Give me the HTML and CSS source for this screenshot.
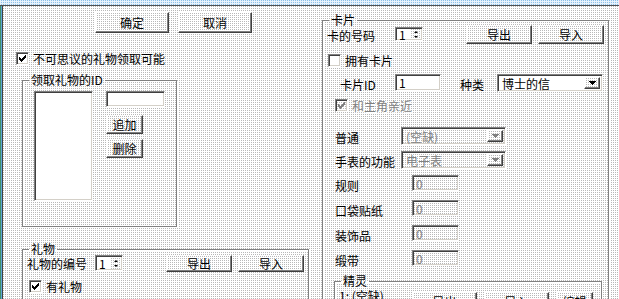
FILE: index.html
```html
<!DOCTYPE html>
<html lang="zh-CN">
<head>
    <meta charset="UTF-8">
    <meta name="viewport" content="width=device-width, initial-scale=1.0">
    <title>礼物与卡片</title>
    <link rel="stylesheet" href="styles.css">
</head>
<body>
    <div class="screen">
        <div class="top-edge"></div>
        <div class="main">
            <div class="left-edge"></div>

            <!-- left column -->
            <div class="col-left">
                <div class="dialog-buttons">
                    <button class="btn btn-wide">确定</button>
                    <button class="btn btn-wide">取消</button>
                </div>

                <div class="check-row wonder-row">
                    <span class="check"><svg viewBox="0 0 7 7" width="7" height="7"><path d="M0 2h1v1h1v1h1v-1h1v-1h1v-1h1v-1h1v3h-1v1h-1v1h-1v1h-1v1h-1v-1h-1v-1h-1z"/></svg></span>
                    <span>不可思议的礼物领取可能</span>
                </div>

                <fieldset class="group group-ids">
                    <legend>领取礼物的ID</legend>
                    <div class="ids-body">
                        <div class="sunken listbox"></div>
                        <div class="ids-side">
                            <div class="sunken id-field"></div>
                            <button class="btn btn-small">追加</button>
                            <button class="btn btn-small">删除</button>
                        </div>
                    </div>
                </fieldset>

                <fieldset class="group group-gift">
                    <legend>礼物</legend>
                    <div class="gift-row">
                        <span class="gift-label">礼物的编号</span>
                        <div class="sunken spin">
                            <span class="spin-val">1</span>
                            <span class="spin-btns"><i class="arr-up"></i><i class="arr-down"></i></span>
                        </div>
                        <button class="btn btn-io btn-export">导出</button>
                        <button class="btn btn-io">导入</button>
                    </div>
                    <div class="check-row has-gift">
                        <span class="check"><svg viewBox="0 0 7 7" width="7" height="7"><path d="M0 2h1v1h1v1h1v-1h1v-1h1v-1h1v-1h1v3h-1v1h-1v1h-1v1h-1v1h-1v-1h-1v-1h-1z"/></svg></span>
                        <span>有礼物</span>
                    </div>
                </fieldset>
            </div>

            <!-- right column -->
            <div class="col-right">
                <fieldset class="group group-card">
                    <legend>卡片</legend>

                    <div class="card-row row-number">
                        <span class="lbl lbl-number">卡的号码</span>
                        <div class="sunken spin spin-card">
                            <span class="spin-val">1</span>
                            <span class="spin-btns"><i class="arr-up"></i><i class="arr-down"></i></span>
                        </div>
                        <button class="btn btn-io btn-card-export">导出</button>
                        <button class="btn btn-io">导入</button>
                    </div>

                    <div class="check-row own-row">
                        <span class="check"></span>
                        <span>拥有卡片</span>
                    </div>

                    <div class="card-row row-id">
                        <span class="lbl lbl-id">卡片ID</span>
                        <div class="sunken text-field card-id">1</div>
                        <span class="lbl lbl-kind">种类</span>
                        <div class="sunken combo kind-combo">
                            <span class="combo-text">博士的信</span>
                            <span class="drop"><svg viewBox="0 0 7 4" width="7" height="4"><path d="M0 0h7v1h-1v1h-1v1h-1v1h-1v-1h-1v-1h-1v-1h-1z"/></svg></span>
                        </div>
                    </div>

                    <div class="check-row close-row disabled">
                        <span class="check"><svg viewBox="0 0 7 7" width="7" height="7"><path d="M0 2h1v1h1v1h1v-1h1v-1h1v-1h1v-1h1v3h-1v1h-1v1h-1v1h-1v1h-1v-1h-1v-1h-1z"/></svg></span>
                        <span>和主角亲近</span>
                    </div>

                    <div class="card-row combo-row first-combo">
                        <span class="lbl lbl-combo">普通</span>
                        <div class="sunken combo combo-off">
                            <span class="combo-text">(空缺)</span>
                            <span class="drop"><svg viewBox="0 0 7 4" width="7" height="4"><path d="M0 0h7v1h-1v1h-1v1h-1v1h-1v-1h-1v-1h-1v-1h-1z"/></svg></span>
                        </div>
                    </div>

                    <div class="card-row combo-row">
                        <span class="lbl lbl-combo">手表的功能</span>
                        <div class="sunken combo combo-off">
                            <span class="combo-text">电子表</span>
                            <span class="drop"><svg viewBox="0 0 7 4" width="7" height="4"><path d="M0 0h7v1h-1v1h-1v1h-1v1h-1v-1h-1v-1h-1v-1h-1z"/></svg></span>
                        </div>
                    </div>

                    <div class="card-row num-row">
                        <span class="lbl lbl-num">规则</span>
                        <div class="sunken text-field num-off">0</div>
                    </div>
                    <div class="card-row num-row">
                        <span class="lbl lbl-num">口袋贴纸</span>
                        <div class="sunken text-field num-off">0</div>
                    </div>
                    <div class="card-row num-row">
                        <span class="lbl lbl-num">装饰品</span>
                        <div class="sunken text-field num-off">0</div>
                    </div>
                    <div class="card-row num-row">
                        <span class="lbl lbl-num">缎带</span>
                        <div class="sunken text-field num-off">0</div>
                    </div>

                    <fieldset class="group group-spirit">
                        <legend>精灵</legend>
                        <div class="spirit-row">
                            <span class="spirit-slot">1: (空缺)</span>
                            <button class="btn btn-spirit">导出</button>
                            <button class="btn btn-spirit">导入</button>
                            <button class="btn btn-edit">编辑</button>
                        </div>
                    </fieldset>
                </fieldset>
            </div>
        </div>
    </div>
</body>
</html>
```

FILE: styles.css
```css
* {
    box-sizing: border-box;
}

body {
    margin: 0;
    font-family: "Noto Sans CJK SC", "Noto Sans", sans-serif;
    font-size: 12px;
    line-height: 12px;
    color: #000;
}

/* dithered window face */
.screen {
    width: 619px;
    height: 299px;
    overflow: hidden;
    background: conic-gradient(#b8b8b8 25%, #fff 0) 0 0 / 2px 2px;
}

.top-edge {
    height: 6px;
    background: conic-gradient(#8cbfe8 25%, #e6f2fc 0) 0 0 / 2px 2px;
    border-bottom: 1px solid #505050;
}

.main {
    display: flex;
    height: 293px;
}

.left-edge {
    width: 3px;
    background: linear-gradient(to right, #3f8f6a 0 1px, #5fa8d8 1px 2px, #404040 2px);
}

.col-left {
    width: 306px;
    flex: none;
}

.col-right {
    width: 287px;
    margin-left: 13px;
    flex: none;
}

/* controls */
.btn {
    display: flex;
    align-items: center;
    justify-content: center;
    padding: 0;
    font: inherit;
    color: #000;
    background: conic-gradient(#b8b8b8 25%, #fff 0) 0 0 / 2px 2px;
    border: 1px solid;
    border-color: #fff #404040 #404040 #fff;
    box-shadow: inset -1px -1px #808080;
}

.sunken {
    background: #fff;
    border: 1px solid;
    border-color: #808080 #fff #fff #808080;
    box-shadow: inset 1px 1px #404040, inset -1px -1px #d4d0c8;
}

.check {
    width: 13px;
    height: 13px;
    flex: none;
    display: flex;
    align-items: center;
    justify-content: center;
    background: #fff;
    border: 1px solid;
    border-color: #808080 #fff #fff #808080;
    box-shadow: inset 1px 1px #404040, inset -1px -1px #d4d0c8;
}

.check svg {
    fill: #000;
    shape-rendering: crispEdges;
}

.check-row {
    display: flex;
    align-items: center;
    gap: 4px;
    height: 13px;
}

.disabled {
    color: #808080;
    text-shadow: 1px 1px #fff;
}

.disabled .check {
    background: conic-gradient(#b8b8b8 25%, #fff 0) 0 0 / 2px 2px;
}

.disabled .check svg {
    fill: #808080;
}

/* group boxes */
.group {
    margin: 0;
    padding: 0;
    min-width: 0;
    border: 1px solid #808080;
    box-shadow: 1px 1px 0 #fff, inset 1px 1px 0 #fff;
}

.group legend {
    margin-left: 6px;
    padding: 0 2px;
    line-height: 12px;
}

/* left column */
.dialog-buttons {
    display: flex;
    gap: 9px;
    margin: 6px 0 0 92px;
}

.btn-wide {
    width: 74px;
    height: 21px;
}

.wonder-row {
    margin: 19px 0 0 13px;
}

.group-ids {
    width: 155px;
    height: 153px;
    margin: 9px 0 0 19px;
}

.ids-body {
    display: flex;
    padding: 5px 0 0 11px;
}

.listbox {
    width: 59px;
    height: 110px;
}

.ids-side {
    margin-left: 13px;
}

.id-field {
    width: 59px;
    height: 16px;
}

.btn-small {
    width: 37px;
    height: 19px;
    margin-top: 8px;
}

.btn-small + .btn-small {
    margin-top: 5px;
}

.group-gift {
    width: 287px;
    height: 80px;
    margin: 16px 0 0 19px;
}

.gift-row {
    display: flex;
    align-items: flex-start;
    padding-left: 4px;
}

.gift-label {
    width: 68px;
    margin-top: 3px;
}

.spin {
    display: flex;
    justify-content: space-between;
    width: 28px;
    height: 16px;
    padding: 2px 1px 1px 3px;
}

.spin-val {
    line-height: 12px;
}

.spin-btns {
    display: flex;
    flex-direction: column;
    justify-content: space-around;
    align-items: center;
    width: 11px;
    background: conic-gradient(#b8b8b8 25%, #fff 0) 0 0 / 2px 2px;
}

.arr-up,
.arr-down {
    width: 0;
    height: 0;
    border-left: 2px solid transparent;
    border-right: 2px solid transparent;
}

.arr-up {
    border-bottom: 2px solid #000;
}

.arr-down {
    border-top: 2px solid #000;
}

.btn-io {
    width: 66px;
    height: 17px;
}

.btn-io + .btn-io {
    margin-left: 6px;
}

.btn-export {
    margin-left: 43px;
}

.has-gift {
    margin: 8px 0 0 6px;
}

/* right column: card group */
.group-card {
    width: 287px;
    height: 320px;
    margin-top: 8px;
}

.card-row {
    display: flex;
    align-items: flex-start;
}

.lbl {
    margin-top: 5px;
    flex: none;
}

.row-number {
    margin-top: -1px;
    padding-left: 4px;
}

.lbl-number {
    width: 68px;
}

.spin-card {
    height: 14px;
    margin-top: 2px;
    padding-top: 1px;
}

.row-number .btn-io {
    height: 19px;
    width: 66px;
}

.btn-card-export {
    margin-left: 43px;
}

.own-row {
    margin: 10px 0 0 5px;
}

.row-id {
    margin-top: 7px;
    padding-left: 17px;
}

.lbl-id {
    width: 55px;
}

.text-field {
    padding: 2px 0 0 3px;
    line-height: 12px;
}

.card-id {
    width: 46px;
    height: 17px;
}

.lbl-kind {
    margin-left: 19px;
    width: 37px;
}

.combo {
    display: flex;
    justify-content: space-between;
    height: 18px;
    padding: 2px;
}

.combo-text {
    padding: 1px 0 0 2px;
}

.kind-combo {
    width: 106px;
}

.drop {
    width: 16px;
    display: flex;
    align-items: center;
    justify-content: center;
    background: conic-gradient(#b8b8b8 25%, #fff 0) 0 0 / 2px 2px;
    border: 1px solid;
    border-color: #fff #404040 #404040 #fff;
    box-shadow: inset -1px -1px #808080;
}

.drop svg {
    fill: #000;
    shape-rendering: crispEdges;
}

.close-row {
    margin: 7px 0 0 12px;
}

.combo-row,
.num-row {
    padding-left: 12px;
    margin-top: 6px;
}

.first-combo {
    margin-top: 15px;
}

.lbl-combo {
    width: 66px;
}

.combo-off {
    width: 105px;
    color: #808080;
    background: conic-gradient(#b8b8b8 25%, #fff 0) 0 0 / 2px 2px;
}

.combo-off .drop svg {
    fill: #808080;
}

.num-row + .num-row {
    margin-top: 8px;
}

.lbl-num {
    width: 77px;
}

.num-off {
    width: 47px;
    height: 16px;
    color: #808080;
    background: conic-gradient(#b8b8b8 25%, #fff 0) 0 0 / 2px 2px;
}

/* spirit sub group */
.group-spirit {
    width: 268px;
    height: 60px;
    margin: 8px 0 0 11px;
}

.spirit-row {
    display: flex;
    align-items: flex-start;
    padding-left: 4px;
    margin-top: 3px;
}

.spirit-slot {
    width: 73px;
}

.btn-spirit {
    width: 65px;
    height: 19px;
    margin-top: 2px;
}

.btn-spirit + .btn-spirit {
    margin-left: 7px;
}

.btn-edit {
    width: 37px;
    height: 19px;
    margin-top: 2px;
    margin-left: 7px;
}
```
